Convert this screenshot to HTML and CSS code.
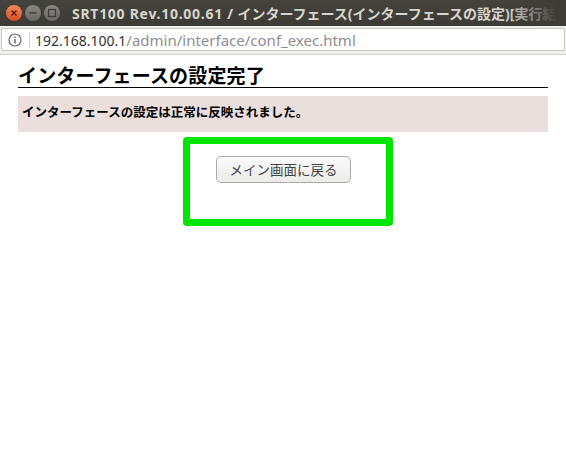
FILE: index.html
```html
<!DOCTYPE html>
<html lang="ja">
<head>
  <meta charset="UTF-8" />
  <meta name="viewport" content="width=device-width, initial-scale=1.0">
  <title>インターフェースの設定完了</title>
  <link rel="stylesheet" href="styles.css">
</head>
<body>
  <div class="titlebar">
    <div class="winBtns">
      <span class="winBtn close">
        <svg width="16" height="16" viewBox="0 0 16 16"><path d="M5.5 5.5l5 5M10.5 5.5l-5 5" stroke="#5a1a08" stroke-width="1.3" fill="none"/></svg>
      </span>
      <span class="winBtn">
        <svg width="16" height="16" viewBox="0 0 16 16"><path d="M4.5 8h7" stroke="#3c3b37" stroke-width="1.4" fill="none"/></svg>
      </span>
      <span class="winBtn">
        <svg width="16" height="16" viewBox="0 0 16 16"><rect x="4.5" y="4.5" width="7" height="7" stroke="#3c3b37" stroke-width="1.2" fill="none"/></svg>
      </span>
    </div>
    <div class="winTitle"><span class="latin">SRT100 Rev.10.00.61 /</span> インターフェース(インターフェースの設定)[実行結</div>
    <div class="titleFade"></div>
  </div>

  <div class="urlbar">
    <div class="urlbox">
      <svg class="infoIcon" width="16" height="16" viewBox="0 0 16 16">
        <circle cx="8" cy="8" r="6" stroke="#6a6a6a" stroke-width="1.2" fill="none"/>
        <path d="M8 7v4.5" stroke="#6a6a6a" stroke-width="1.5" fill="none"/>
        <path d="M8 4.4v1.5" stroke="#6a6a6a" stroke-width="1.5" fill="none"/>
      </svg>
      <span class="urlSep"></span>
      <span class="url"><span class="host">192.168.100.1</span>/admin/interface/conf_exec.html</span>
    </div>
  </div>

  <div class="content">
    <h1>インターフェースの設定完了</h1>
    <div class="message">インターフェースの設定は正常に反映されました。</div>
    <div class="actions">
      <div class="highlight">
        <button class="backBtn">メイン画面に戻る</button>
      </div>
    </div>
  </div>
</body>
</html>
```

FILE: styles.css
```css
* { box-sizing: border-box; }
html, body {
  overflow: hidden;
}
body {
  margin: 0;
  font-family: "Liberation Sans", "Noto Sans CJK JP", sans-serif;
  background: white;
  color: black;
}
.titlebar {
  position: relative;
  height: 26px;
  display: flex;
  align-items: center;
  background: linear-gradient(#45433e, #3b3a35);
  overflow: hidden;
}
.winBtns {
  display: flex;
  gap: 3px;
  margin-left: 6px;
}
.winBtn {
  width: 16px;
  height: 16px;
  border-radius: 50%;
  background: linear-gradient(#888680, #6a6862);
  display: flex;
}
.winBtn.close {
  background: linear-gradient(#f08a5f, #dd4b1f);
}
.winTitle {
  margin-left: 12px;
  font-family: "Noto Sans", "Noto Sans CJK JP", sans-serif;
  font-size: 14px;
  font-weight: bold;
  color: #d8d5cd;
  white-space: nowrap;
}
.latin {
  letter-spacing: 0.72px;
}
.titleFade {
  position: absolute;
  top: 0;
  right: 0;
  width: 60px;
  height: 26px;
  background: linear-gradient(to right, rgba(62,60,55,0), #3e3c37 85%);
}
.urlbar {
  height: 29px;
  padding: 2px 1px 0;
  background: #f1f0ee;
  border-bottom: 1px solid #d4d2ce;
}
.urlbox {
  height: 23px;
  background: white;
  border: 1px solid #c9c7c2;
  border-radius: 2px;
  display: flex;
  align-items: center;
  padding-left: 5px;
}
.urlSep {
  width: 1px;
  height: 15px;
  background: #d0d0d0;
  margin: 0 5px 0 6px;
}
.url {
  font-family: "Noto Sans", sans-serif;
  font-size: 15px;
  color: #8d8d94;
  white-space: nowrap;
}
.host {
  font-size: 14px;
  color: #333;
}
.content {
  padding: 10px 18px 0;
}
h1 {
  margin: 0;
  height: 23px;
  font-size: 19px;
  line-height: 24px;
  letter-spacing: 0.15px;
  font-weight: bold;
  border-bottom: 1px solid black;
}
.message {
  margin-top: 8px;
  height: 36px;
  padding-left: 4px;
  line-height: 35px;
  font-size: 12.5px;
  font-weight: bold;
  background: #eadfdd;
}
.actions {
  display: flex;
  justify-content: center;
  margin-top: 5px;
}
.highlight {
  width: 210px;
  height: 89px;
  margin-left: 10px;
  border: 7px solid #00e600;
  border-radius: 4px;
  padding: 12px 0 0 26px;
}
.backBtn {
  display: block;
  width: 135px;
  height: 27px;
  padding: 0 0 2px;
  font-family: "Noto Sans CJK JP", sans-serif;
  font-size: 13.5px;
  color: #444;
  background: linear-gradient(#fafafa, #ecebea);
  border: 1px solid #aaa;
  border-radius: 5px;
}
```
